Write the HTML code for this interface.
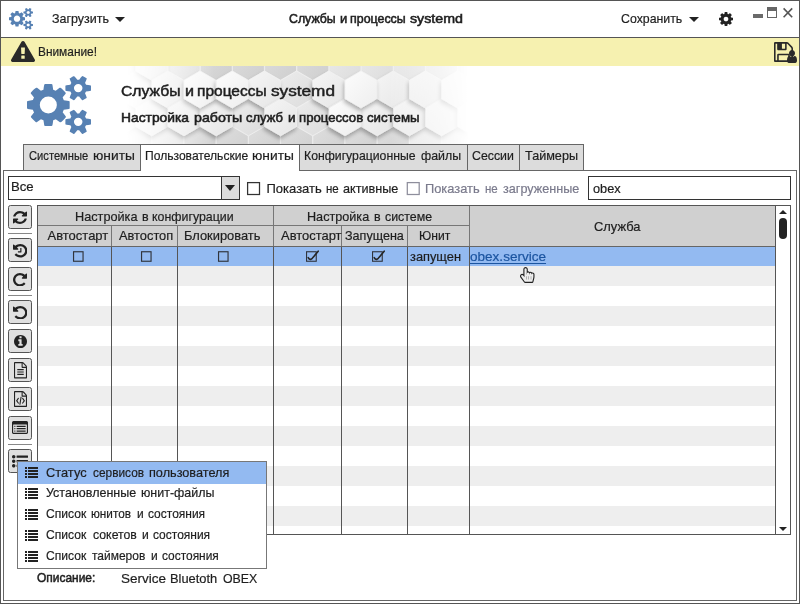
<!DOCTYPE html>
<html lang="ru"><head><meta charset="utf-8"><title>Службы и процессы systemd</title>
<style>
html,body{margin:0;padding:0;}
body{width:800px;height:604px;position:relative;overflow:hidden;background:#fff;font-family:"Liberation Sans", sans-serif;}
.p{position:absolute;left:0;top:0;white-space:pre;}
.t{position:absolute;white-space:pre;z-index:6;transform-origin:0 0;}
#txt{position:absolute;left:0;top:0;width:800px;height:604px;z-index:6;will-change:transform;}
#win{position:absolute;left:0;top:0;width:800px;height:604px;box-sizing:border-box;border:1px solid #555;z-index:9;pointer-events:none;}
</style></head><body>
<div style="position:absolute;left:0px;top:0px;width:800px;height:604px;background:#fff;"></div>
<div style="position:absolute;left:0px;top:37px;width:800px;height:1px;background:#555;"></div>
<div style="position:absolute;left:1px;top:38px;width:798px;height:28px;background:#f6f1b0;"></div>
<svg style="position:absolute;left:9px;top:8px;" width="24" height="21.5" viewBox="0 -1520 1920 1761" preserveAspectRatio="none"><path transform="scale(1,-1)" fill="#5781b3" d="M896 640q0 106 -75 181t-181 75t-181 -75t-75 -181t75 -181t181 -75t181 75t75 181zM1664 128q0 52 -38 90t-90 38t-90 -38t-38 -90q0 -53 37.5 -90.5t90.5 -37.5t90.5 37.5t37.5 90.5zM1664 1152q0 52 -38 90t-90 38t-90 -38t-38 -90q0 -53 37.5 -90.5t90.5 -37.5 t90.5 37.5t37.5 90.5zM1280 731v-185q0 -10 -7 -19.5t-16 -10.5l-155 -24q-11 -35 -32 -76q34 -48 90 -115q7 -11 7 -20q0 -12 -7 -19q-23 -30 -82.5 -89.5t-78.5 -59.5q-11 0 -21 7l-115 90q-37 -19 -77 -31q-11 -108 -23 -155q-7 -24 -30 -24h-186q-11 0 -20 7.5t-10 17.5 l-23 153q-34 10 -75 31l-118 -89q-7 -7 -20 -7q-11 0 -21 8q-144 133 -144 160q0 9 7 19q10 14 41 53t47 61q-23 44 -35 82l-152 24q-10 1 -17 9.5t-7 19.5v185q0 10 7 19.5t16 10.5l155 24q11 35 32 76q-34 48 -90 115q-7 11 -7 20q0 12 7 20q22 30 82 89t79 59q11 0 21 -7 l115 -90q34 18 77 32q11 108 23 154q7 24 30 24h186q11 0 20 -7.5t10 -17.5l23 -153q34 -10 75 -31l118 89q8 7 20 7q11 0 21 -8q144 -133 144 -160q0 -8 -7 -19q-12 -16 -42 -54t-45 -60q23 -48 34 -82l152 -23q10 -2 17 -10.5t7 -19.5zM1920 198v-140q0 -16 -149 -31 q-12 -27 -30 -52q51 -113 51 -138q0 -4 -4 -7q-122 -71 -124 -71q-8 0 -46 47t-52 68q-20 -2 -30 -2t-30 2q-14 -21 -52 -68t-46 -47q-2 0 -124 71q-4 3 -4 7q0 25 51 138q-18 25 -30 52q-149 15 -149 31v140q0 16 149 31q13 29 30 52q-51 113 -51 138q0 4 4 7q4 2 35 20 t59 34t30 16q8 0 46 -46.5t52 -67.5q20 2 30 2t30 -2q51 71 92 112l6 2q4 0 124 -70q4 -3 4 -7q0 -25 -51 -138q17 -23 30 -52q149 -15 149 -31zM1920 1222v-140q0 -16 -149 -31q-12 -27 -30 -52q51 -113 51 -138q0 -4 -4 -7q-122 -71 -124 -71q-8 0 -46 47t-52 68 q-20 -2 -30 -2t-30 2q-14 -21 -52 -68t-46 -47q-2 0 -124 71q-4 3 -4 7q0 25 51 138q-18 25 -30 52q-149 15 -149 31v140q0 16 149 31q13 29 30 52q-51 113 -51 138q0 4 4 7q4 2 35 20t59 34t30 16q8 0 46 -46.5t52 -67.5q20 2 30 2t30 -2q51 71 92 112l6 2q4 0 124 -70 q4 -3 4 -7q0 -25 -51 -138q17 -23 30 -52q149 -15 149 -31z"/></svg>
<svg style="position:absolute;left:115px;top:17px" width="10" height="5" viewBox="0 0 10 5"><path d="M0 0H10L5 5Z" fill="#222"/></svg>
<svg style="position:absolute;left:689px;top:17px" width="10" height="5" viewBox="0 0 10 5"><path d="M0 0H10L5 5Z" fill="#222"/></svg>
<svg style="position:absolute;left:719px;top:12px;" width="14" height="14" viewBox="0 -1408 1536 1536" preserveAspectRatio="none"><path transform="scale(1,-1)" fill="#222" d="M1024 640q0 106 -75 181t-181 75t-181 -75t-75 -181t75 -181t181 -75t181 75t75 181zM1536 749v-222q0 -12 -8 -23t-20 -13l-185 -28q-19 -54 -39 -91q35 -50 107 -138q10 -12 10 -25t-9 -23q-27 -37 -99 -108t-94 -71q-12 0 -26 9l-138 108q-44 -23 -91 -38 q-16 -136 -29 -186q-7 -28 -36 -28h-222q-14 0 -24.5 8.5t-11.5 21.5l-28 184q-49 16 -90 37l-141 -107q-10 -9 -25 -9q-14 0 -25 11q-126 114 -165 168q-7 10 -7 23q0 12 8 23q15 21 51 66.5t54 70.5q-27 50 -41 99l-183 27q-13 2 -21 12.5t-8 23.5v222q0 12 8 23t19 13 l186 28q14 46 39 92q-40 57 -107 138q-10 12 -10 24q0 10 9 23q26 36 98.5 107.5t94.5 71.5q13 0 26 -10l138 -107q44 23 91 38q16 136 29 186q7 28 36 28h222q14 0 24.5 -8.5t11.5 -21.5l28 -184q49 -16 90 -37l142 107q9 9 24 9q13 0 25 -10q129 -119 165 -170q7 -8 7 -22 q0 -12 -8 -23q-15 -21 -51 -66.5t-54 -70.5q26 -50 41 -98l183 -28q13 -2 21 -12.5t8 -23.5z"/></svg>
<div style="position:absolute;left:753px;top:14px;width:10px;height:4px;background:#6a6a6a;"></div>
<div style="position:absolute;left:767px;top:7px;width:10px;height:11px;box-sizing:border-box;border:1px solid #666;border-top:4px solid #666;background:#fff;"></div>
<svg style="position:absolute;left:782px;top:7px" width="12" height="12" viewBox="0 0 12 12"><path d="M1.6 1.4L10.2 10.2M10.2 1.4L1.6 10.2" stroke="#555" stroke-width="1.6" fill="none"/></svg>
<svg style="position:absolute;left:11px;top:41px;" width="24" height="21" viewBox="-1.0138893127441406 -1536 1794.02783203125 1664" preserveAspectRatio="none"><path transform="scale(1,-1)" fill="#2a2a2a" d="M1024 161v190q0 14 -9.5 23.5t-22.5 9.5h-192q-13 0 -22.5 -9.5t-9.5 -23.5v-190q0 -14 9.5 -23.5t22.5 -9.5h192q13 0 22.5 9.5t9.5 23.5zM1022 535l18 459q0 12 -10 19q-13 11 -24 11h-220q-11 0 -24 -11q-10 -7 -10 -21l17 -457q0 -10 10 -16.5t24 -6.5h185 q14 0 23.5 6.5t10.5 16.5zM1008 1469l768 -1408q35 -63 -2 -126q-17 -29 -46.5 -46t-63.5 -17h-1536q-34 0 -63.5 17t-46.5 46q-37 63 -2 126l768 1408q17 31 47 49t65 18t65 -18t47 -49z"/></svg>
<svg style="position:absolute;left:774px;top:42px;" width="19" height="20" viewBox="0 -1408 1536 1536" preserveAspectRatio="none"><path transform="scale(1,-1)" fill="#2a2a2a" d="M384 0h768v384h-768v-384zM1280 0h128v896q0 14 -10 38.5t-20 34.5l-281 281q-10 10 -34 20t-39 10v-416q0 -40 -28 -68t-68 -28h-576q-40 0 -68 28t-28 68v416h-128v-1280h128v416q0 40 28 68t68 28h832q40 0 68 -28t28 -68v-416zM896 928v320q0 13 -9.5 22.5t-22.5 9.5 h-192q-13 0 -22.5 -9.5t-9.5 -22.5v-320q0 -13 9.5 -22.5t22.5 -9.5h192q13 0 22.5 9.5t9.5 22.5zM1536 896v-928q0 -40 -28 -68t-68 -28h-1344q-40 0 -68 28t-28 68v1344q0 40 28 68t68 28h928q40 0 88 -20t76 -48l280 -280q28 -28 48 -76t20 -88z"/></svg>
<svg style="position:absolute;left:787px;top:50px;" width="10" height="13" viewBox="0 -1408 1280 1536" preserveAspectRatio="none"><path transform="scale(1,-1)" fill="#2a2a2a" d="M1280 137q0 -109 -62.5 -187t-150.5 -78h-854q-88 0 -150.5 78t-62.5 187q0 85 8.5 160.5t31.5 152t58.5 131t94 89t134.5 34.5q131 -128 313 -128t313 128q76 0 134.5 -34.5t94 -89t58.5 -131t31.5 -152t8.5 -160.5zM1024 1024q0 -159 -112.5 -271.5t-271.5 -112.5 t-271.5 112.5t-112.5 271.5t112.5 271.5t271.5 112.5t271.5 -112.5t112.5 -271.5z"/></svg>
<svg style="position:absolute;left:100px;top:66px" width="380" height="78" viewBox="100 66 380 78"><defs><linearGradient id="hm" x1="0" x2="1" y1="0" y2="0"><stop offset="0" stop-color="#000"/><stop offset="0.07" stop-color="#000"/><stop offset="0.30" stop-color="#fff"/><stop offset="0.76" stop-color="#fff"/><stop offset="0.97" stop-color="#000"/><stop offset="1" stop-color="#000"/></linearGradient><mask id="hmask" maskUnits="userSpaceOnUse" x="100" y="66" width="380" height="78"><rect x="100" y="66" width="380" height="78" fill="url(#hm)"/></mask><linearGradient id="hf" x1="0" y1="0" x2="1" y2="1"><stop offset="0" stop-color="#fcfcfc"/><stop offset="1" stop-color="#eeeeee"/></linearGradient><linearGradient id="hg" x1="0" y1="0" x2="1" y2="1"><stop offset="0" stop-color="#f5f5f5"/><stop offset="1" stop-color="#e6e6e6"/></linearGradient><linearGradient id="hd" x1="0" y1="0" x2="1" y2="1"><stop offset="0" stop-color="#ececec"/><stop offset="1" stop-color="#dcdcdc"/></linearGradient><linearGradient id="hdd" x1="0" y1="0" x2="1" y2="1"><stop offset="0" stop-color="#dedede"/><stop offset="1" stop-color="#cecece"/></linearGradient><filter id="hs" x="-30%" y="-30%" width="160%" height="160%"><feGaussianBlur in="SourceAlpha" stdDeviation="2.2"/><feOffset dx="-1.5" dy="2.5"/><feComponentTransfer><feFuncA type="linear" slope="0.3"/></feComponentTransfer><feMerge><feMergeNode/><feMergeNode in="SourceGraphic"/></feMerge></filter></defs><g mask="url(#hmask)"><rect x="100" y="66" width="380" height="78" fill="#e2e2e2"/><polygon points="200.0,126.6 215.9,135.8 215.9,154.2 200.0,163.4 184.1,154.2 184.1,135.8" fill="url(#hdd)" stroke="#f4f4f4" stroke-width="0.5"/><polygon points="216.2,43.3 232.1,52.5 232.1,71.0 216.2,80.2 200.3,71.0 200.3,52.5" fill="url(#hdd)" stroke="#f4f4f4" stroke-width="0.5"/><polygon points="232.2,126.6 248.1,135.8 248.1,154.2 232.2,163.4 216.3,154.2 216.3,135.8" fill="url(#hdd)" stroke="#f4f4f4" stroke-width="0.5"/><polygon points="248.4,43.3 264.3,52.5 264.3,71.0 248.4,80.2 232.5,71.0 232.5,52.5" fill="url(#hdd)" stroke="#f4f4f4" stroke-width="0.5"/><polygon points="264.4,126.6 280.3,135.8 280.3,154.2 264.4,163.4 248.5,154.2 248.5,135.8" fill="url(#hdd)" stroke="#f4f4f4" stroke-width="0.5"/><polygon points="280.6,43.3 296.5,52.5 296.5,71.0 280.6,80.2 264.7,71.0 264.7,52.5" fill="url(#hdd)" stroke="#f4f4f4" stroke-width="0.5"/><polygon points="296.6,126.6 312.5,135.8 312.5,154.2 296.6,163.4 280.7,154.2 280.7,135.8" fill="url(#hdd)" stroke="#f4f4f4" stroke-width="0.5"/><polygon points="312.8,43.3 328.7,52.5 328.7,71.0 312.8,80.2 296.9,71.0 296.9,52.5" fill="url(#hdd)" stroke="#f4f4f4" stroke-width="0.5"/><polygon points="328.8,126.6 344.7,135.8 344.7,154.2 328.8,163.4 312.9,154.2 312.9,135.8" fill="url(#hdd)" stroke="#f4f4f4" stroke-width="0.5"/><polygon points="361.0,126.6 376.9,135.8 376.9,154.2 361.0,163.4 345.1,154.2 345.1,135.8" fill="url(#hdd)" stroke="#f4f4f4" stroke-width="0.5"/><polygon points="393.2,126.6 409.1,135.8 409.1,154.2 393.2,163.4 377.3,154.2 377.3,135.8" fill="url(#hdd)" stroke="#f4f4f4" stroke-width="0.5"/><polygon points="87.4,43.3 103.3,52.5 103.3,71.0 87.4,80.2 71.5,71.0 71.5,52.5" fill="url(#hd)" stroke="#f4f4f4" stroke-width="0.5"/><polygon points="103.4,126.6 119.3,135.8 119.3,154.2 103.4,163.4 87.5,154.2 87.5,135.8" fill="url(#hd)" stroke="#f4f4f4" stroke-width="0.5"/><polygon points="119.6,43.3 135.5,52.5 135.5,71.0 119.6,80.2 103.7,71.0 103.7,52.5" fill="url(#hd)" stroke="#f4f4f4" stroke-width="0.5"/><polygon points="135.6,126.6 151.5,135.8 151.5,154.2 135.6,163.4 119.7,154.2 119.7,135.8" fill="url(#hd)" stroke="#f4f4f4" stroke-width="0.5"/><polygon points="167.8,126.6 183.7,135.8 183.7,154.2 167.8,163.4 151.9,154.2 151.9,135.8" fill="url(#hd)" stroke="#f4f4f4" stroke-width="0.5"/><polygon points="184.0,43.3 199.9,52.5 199.9,71.0 184.0,80.2 168.1,71.0 168.1,52.5" fill="url(#hd)" stroke="#f4f4f4" stroke-width="0.5"/><polygon points="248.4,98.8 264.3,108.0 264.3,126.5 248.4,135.7 232.5,126.5 232.5,108.0" fill="url(#hd)" stroke="#f4f4f4" stroke-width="0.5"/><polygon points="296.6,71.1 312.5,80.3 312.5,98.7 296.6,107.9 280.7,98.7 280.7,80.3" fill="url(#hd)" stroke="#f4f4f4" stroke-width="0.5"/><polygon points="312.8,98.8 328.7,108.0 328.7,126.5 312.8,135.7 296.9,126.5 296.9,108.0" fill="url(#hd)" stroke="#f4f4f4" stroke-width="0.5"/><polygon points="345.0,43.3 360.9,52.5 360.9,71.0 345.0,80.2 329.1,71.0 329.1,52.5" fill="url(#hd)" stroke="#f4f4f4" stroke-width="0.5"/><polygon points="377.2,43.3 393.1,52.5 393.1,71.0 377.2,80.2 361.3,71.0 361.3,52.5" fill="url(#hd)" stroke="#f4f4f4" stroke-width="0.5"/><polygon points="409.4,43.3 425.3,52.5 425.3,71.0 409.4,80.2 393.5,71.0 393.5,52.5" fill="url(#hd)" stroke="#f4f4f4" stroke-width="0.5"/><polygon points="425.4,126.6 441.3,135.8 441.3,154.2 425.4,163.4 409.5,154.2 409.5,135.8" fill="url(#hd)" stroke="#f4f4f4" stroke-width="0.5"/><polygon points="441.6,43.3 457.5,52.5 457.5,71.0 441.6,80.2 425.7,71.0 425.7,52.5" fill="url(#hd)" stroke="#f4f4f4" stroke-width="0.5"/><polygon points="457.6,126.6 473.5,135.8 473.5,154.2 457.6,163.4 441.7,154.2 441.7,135.8" fill="url(#hd)" stroke="#f4f4f4" stroke-width="0.5"/><polygon points="473.8,43.3 489.7,52.5 489.7,71.0 473.8,80.2 457.9,71.0 457.9,52.5" fill="url(#hd)" stroke="#f4f4f4" stroke-width="0.5"/><polygon points="489.8,126.6 505.7,135.8 505.7,154.2 489.8,163.4 473.9,154.2 473.9,135.8" fill="url(#hd)" stroke="#f4f4f4" stroke-width="0.5"/><polygon points="87.4,98.8 103.3,108.0 103.3,126.5 87.4,135.7 71.5,126.5 71.5,108.0" fill="url(#hg)" stroke="#f4f4f4" stroke-width="0.5" filter="url(#hs)"/><polygon points="103.4,71.1 119.3,80.3 119.3,98.7 103.4,107.9 87.5,98.7 87.5,80.3" fill="url(#hg)" stroke="#f4f4f4" stroke-width="0.5" filter="url(#hs)"/><polygon points="119.6,98.8 135.5,108.0 135.5,126.5 119.6,135.7 103.7,126.5 103.7,108.0" fill="url(#hg)" stroke="#f4f4f4" stroke-width="0.5" filter="url(#hs)"/><polygon points="135.6,71.1 151.5,80.3 151.5,98.7 135.6,107.9 119.7,98.7 119.7,80.3" fill="url(#hg)" stroke="#f4f4f4" stroke-width="0.5" filter="url(#hs)"/><polygon points="151.8,43.3 167.7,52.5 167.7,71.0 151.8,80.2 135.9,71.0 135.9,52.5" fill="url(#hg)" stroke="#f4f4f4" stroke-width="0.5" filter="url(#hs)"/><polygon points="151.8,98.8 167.7,108.0 167.7,126.5 151.8,135.7 135.9,126.5 135.9,108.0" fill="url(#hg)" stroke="#f4f4f4" stroke-width="0.5" filter="url(#hs)"/><polygon points="167.8,71.1 183.7,80.3 183.7,98.7 167.8,107.9 151.9,98.7 151.9,80.3" fill="url(#hg)" stroke="#f4f4f4" stroke-width="0.5" filter="url(#hs)"/><polygon points="184.0,98.8 199.9,108.0 199.9,126.5 184.0,135.7 168.1,126.5 168.1,108.0" fill="url(#hg)" stroke="#f4f4f4" stroke-width="0.5" filter="url(#hs)"/><polygon points="216.2,98.8 232.1,108.0 232.1,126.5 216.2,135.7 200.3,126.5 200.3,108.0" fill="url(#hg)" stroke="#f4f4f4" stroke-width="0.5" filter="url(#hs)"/><polygon points="264.4,71.1 280.3,80.3 280.3,98.7 264.4,107.9 248.5,98.7 248.5,80.3" fill="url(#hg)" stroke="#f4f4f4" stroke-width="0.5" filter="url(#hs)"/><polygon points="280.6,98.8 296.5,108.0 296.5,126.5 280.6,135.7 264.7,126.5 264.7,108.0" fill="url(#hg)" stroke="#f4f4f4" stroke-width="0.5" filter="url(#hs)"/><polygon points="328.8,71.1 344.7,80.3 344.7,98.7 328.8,107.9 312.9,98.7 312.9,80.3" fill="url(#hg)" stroke="#f4f4f4" stroke-width="0.5" filter="url(#hs)"/><polygon points="377.2,98.8 393.1,108.0 393.1,126.5 377.2,135.7 361.3,126.5 361.3,108.0" fill="url(#hg)" stroke="#f4f4f4" stroke-width="0.5" filter="url(#hs)"/><polygon points="393.2,71.1 409.1,80.3 409.1,98.7 393.2,107.9 377.3,98.7 377.3,80.3" fill="url(#hg)" stroke="#f4f4f4" stroke-width="0.5" filter="url(#hs)"/><polygon points="409.4,98.8 425.3,108.0 425.3,126.5 409.4,135.7 393.5,126.5 393.5,108.0" fill="url(#hg)" stroke="#f4f4f4" stroke-width="0.5" filter="url(#hs)"/><polygon points="425.4,71.1 441.3,80.3 441.3,98.7 425.4,107.9 409.5,98.7 409.5,80.3" fill="url(#hg)" stroke="#f4f4f4" stroke-width="0.5" filter="url(#hs)"/><polygon points="441.6,98.8 457.5,108.0 457.5,126.5 441.6,135.7 425.7,126.5 425.7,108.0" fill="url(#hg)" stroke="#f4f4f4" stroke-width="0.5" filter="url(#hs)"/><polygon points="457.6,71.1 473.5,80.3 473.5,98.7 457.6,107.9 441.7,98.7 441.7,80.3" fill="url(#hg)" stroke="#f4f4f4" stroke-width="0.5" filter="url(#hs)"/><polygon points="473.8,98.8 489.7,108.0 489.7,126.5 473.8,135.7 457.9,126.5 457.9,108.0" fill="url(#hg)" stroke="#f4f4f4" stroke-width="0.5" filter="url(#hs)"/><polygon points="489.8,71.1 505.7,80.3 505.7,98.7 489.8,107.9 473.9,98.7 473.9,80.3" fill="url(#hg)" stroke="#f4f4f4" stroke-width="0.5" filter="url(#hs)"/><polygon points="200.0,71.1 215.9,80.3 215.9,98.7 200.0,107.9 184.1,98.7 184.1,80.3" fill="url(#hf)" stroke="#f4f4f4" stroke-width="0.5" filter="url(#hs)"/><polygon points="232.2,71.1 248.1,80.3 248.1,98.7 232.2,107.9 216.3,98.7 216.3,80.3" fill="url(#hf)" stroke="#f4f4f4" stroke-width="0.5" filter="url(#hs)"/><polygon points="345.0,98.8 360.9,108.0 360.9,126.5 345.0,135.7 329.1,126.5 329.1,108.0" fill="url(#hf)" stroke="#f4f4f4" stroke-width="0.5" filter="url(#hs)"/><polygon points="361.0,71.1 376.9,80.3 376.9,98.7 361.0,107.9 345.1,98.7 345.1,80.3" fill="url(#hf)" stroke="#f4f4f4" stroke-width="0.5" filter="url(#hs)"/></g></svg>
<svg style="position:absolute;left:27px;top:75.5px;" width="64" height="58" viewBox="0 -1520 1920 1761" preserveAspectRatio="none"><path transform="scale(1,-1)" fill="#5781b3" d="M896 640q0 106 -75 181t-181 75t-181 -75t-75 -181t75 -181t181 -75t181 75t75 181zM1664 128q0 52 -38 90t-90 38t-90 -38t-38 -90q0 -53 37.5 -90.5t90.5 -37.5t90.5 37.5t37.5 90.5zM1664 1152q0 52 -38 90t-90 38t-90 -38t-38 -90q0 -53 37.5 -90.5t90.5 -37.5 t90.5 37.5t37.5 90.5zM1280 731v-185q0 -10 -7 -19.5t-16 -10.5l-155 -24q-11 -35 -32 -76q34 -48 90 -115q7 -11 7 -20q0 -12 -7 -19q-23 -30 -82.5 -89.5t-78.5 -59.5q-11 0 -21 7l-115 90q-37 -19 -77 -31q-11 -108 -23 -155q-7 -24 -30 -24h-186q-11 0 -20 7.5t-10 17.5 l-23 153q-34 10 -75 31l-118 -89q-7 -7 -20 -7q-11 0 -21 8q-144 133 -144 160q0 9 7 19q10 14 41 53t47 61q-23 44 -35 82l-152 24q-10 1 -17 9.5t-7 19.5v185q0 10 7 19.5t16 10.5l155 24q11 35 32 76q-34 48 -90 115q-7 11 -7 20q0 12 7 20q22 30 82 89t79 59q11 0 21 -7 l115 -90q34 18 77 32q11 108 23 154q7 24 30 24h186q11 0 20 -7.5t10 -17.5l23 -153q34 -10 75 -31l118 89q8 7 20 7q11 0 21 -8q144 -133 144 -160q0 -8 -7 -19q-12 -16 -42 -54t-45 -60q23 -48 34 -82l152 -23q10 -2 17 -10.5t7 -19.5zM1920 198v-140q0 -16 -149 -31 q-12 -27 -30 -52q51 -113 51 -138q0 -4 -4 -7q-122 -71 -124 -71q-8 0 -46 47t-52 68q-20 -2 -30 -2t-30 2q-14 -21 -52 -68t-46 -47q-2 0 -124 71q-4 3 -4 7q0 25 51 138q-18 25 -30 52q-149 15 -149 31v140q0 16 149 31q13 29 30 52q-51 113 -51 138q0 4 4 7q4 2 35 20 t59 34t30 16q8 0 46 -46.5t52 -67.5q20 2 30 2t30 -2q51 71 92 112l6 2q4 0 124 -70q4 -3 4 -7q0 -25 -51 -138q17 -23 30 -52q149 -15 149 -31zM1920 1222v-140q0 -16 -149 -31q-12 -27 -30 -52q51 -113 51 -138q0 -4 -4 -7q-122 -71 -124 -71q-8 0 -46 47t-52 68 q-20 -2 -30 -2t-30 2q-14 -21 -52 -68t-46 -47q-2 0 -124 71q-4 3 -4 7q0 25 51 138q-18 25 -30 52q-149 15 -149 31v140q0 16 149 31q13 29 30 52q-51 113 -51 138q0 4 4 7q4 2 35 20t59 34t30 16q8 0 46 -46.5t52 -67.5q20 2 30 2t30 -2q51 71 92 112l6 2q4 0 124 -70 q4 -3 4 -7q0 -25 -51 -138q17 -23 30 -52q149 -15 149 -31z"/></svg>
<div style="position:absolute;left:23px;top:144px;width:118px;height:27px;box-sizing:border-box;border:1px solid #666;border-bottom:none;background:#dcdcdc;"></div>
<div style="position:absolute;left:140px;top:144px;width:160px;height:27px;box-sizing:border-box;border:1px solid #666;border-bottom:none;background:#fff;"></div>
<div style="position:absolute;left:299px;top:144px;width:169px;height:27px;box-sizing:border-box;border:1px solid #666;border-bottom:none;background:#dcdcdc;"></div>
<div style="position:absolute;left:467px;top:144px;width:53px;height:27px;box-sizing:border-box;border:1px solid #666;border-bottom:none;background:#dcdcdc;"></div>
<div style="position:absolute;left:519px;top:144px;width:65px;height:27px;box-sizing:border-box;border:1px solid #666;border-bottom:none;background:#dcdcdc;"></div>
<div style="position:absolute;left:3px;top:170px;width:794px;height:431px;box-sizing:border-box;border:1px solid #666;background:#fff;"></div>
<div style="position:absolute;left:141px;top:170px;width:158px;height:1px;background:#fff;z-index:3;"></div>
<div style="position:absolute;left:8px;top:176px;width:232px;height:24px;box-sizing:border-box;border:1px solid #333;background:#fff;"></div>
<div style="position:absolute;left:221px;top:177px;width:18px;height:22px;box-sizing:border-box;border-left:1px solid #333;background:#dcdcdc;"></div>
<svg style="position:absolute;left:225px;top:185px" width="10" height="6" viewBox="0 0 10 6"><path d="M0 0H10L5 6Z" fill="#222"/></svg>
<svg style="position:absolute;left:246px;top:181px" width="15" height="15" viewBox="0 0 15 15"><rect x="1.6" y="1.6" width="11.9" height="11.9" fill="#fff" stroke="#333" stroke-width="1.25"/></svg>
<svg style="position:absolute;left:406px;top:181px" width="15" height="15" viewBox="0 0 15 15"><rect x="1.3" y="1.6" width="11.9" height="11.9" fill="#fff" stroke="#8e8e9c" stroke-width="1.25"/></svg>
<div style="position:absolute;left:588px;top:176px;width:203px;height:24px;box-sizing:border-box;border:1px solid #333;background:#fff;"></div>
<div style="position:absolute;left:8px;top:205px;width:24px;height:24px;box-sizing:border-box;border:1px solid #555;border-radius:2.5px;background:#e0e0e0;"></div>
<div style="position:absolute;left:8px;top:238px;width:24px;height:24px;box-sizing:border-box;border:1px solid #555;border-radius:2.5px;background:#e0e0e0;"></div>
<div style="position:absolute;left:8px;top:267px;width:24px;height:24px;box-sizing:border-box;border:1px solid #555;border-radius:2.5px;background:#e0e0e0;"></div>
<div style="position:absolute;left:8px;top:300px;width:24px;height:24px;box-sizing:border-box;border:1px solid #555;border-radius:2.5px;background:#e0e0e0;"></div>
<div style="position:absolute;left:8px;top:329px;width:24px;height:24px;box-sizing:border-box;border:1px solid #555;border-radius:2.5px;background:#e0e0e0;"></div>
<div style="position:absolute;left:8px;top:358px;width:24px;height:24px;box-sizing:border-box;border:1px solid #555;border-radius:2.5px;background:#e0e0e0;"></div>
<div style="position:absolute;left:8px;top:387px;width:24px;height:24px;box-sizing:border-box;border:1px solid #555;border-radius:2.5px;background:#e0e0e0;"></div>
<div style="position:absolute;left:8px;top:416px;width:24px;height:24px;box-sizing:border-box;border:1px solid #555;border-radius:2.5px;background:#e0e0e0;"></div>
<div style="position:absolute;left:8px;top:449px;width:24px;height:24px;box-sizing:border-box;border:1px solid #555;border-radius:2.5px;background:#e0e0e0;"></div>
<div style="position:absolute;left:8px;top:233px;width:24px;height:1px;background:#888;"></div>
<div style="position:absolute;left:8px;top:295px;width:24px;height:1px;background:#888;"></div>
<div style="position:absolute;left:8px;top:444px;width:24px;height:1px;background:#888;"></div>
<svg style="position:absolute;left:13px;top:211px;" width="14" height="13" viewBox="0 -1408 1536 1536" preserveAspectRatio="none"><path transform="scale(1,-1)" fill="#222" d="M1511 480q0 -5 -1 -7q-64 -268 -268 -434.5t-478 -166.5q-146 0 -282.5 55t-243.5 157l-129 -129q-19 -19 -45 -19t-45 19t-19 45v448q0 26 19 45t45 19h448q26 0 45 -19t19 -45t-19 -45l-137 -137q71 -66 161 -102t187 -36q134 0 250 65t186 179q11 17 53 117 q8 23 30 23h192q13 0 22.5 -9.5t9.5 -22.5zM1536 1280v-448q0 -26 -19 -45t-45 -19h-448q-26 0 -45 19t-19 45t19 45l138 138q-148 137 -349 137q-134 0 -250 -65t-186 -179q-11 -17 -53 -117q-8 -23 -30 -23h-199q-13 0 -22.5 9.5t-9.5 22.5v7q65 268 270 434.5t480 166.5 q146 0 284 -55.5t245 -156.5l130 129q19 19 45 19t45 -19t19 -45z"/></svg>
<svg style="position:absolute;left:12.5px;top:244px;" width="14.5" height="13.5" viewBox="0 -1408 1536 1536" preserveAspectRatio="none"><path transform="scale(1,-1)" fill="#222" d="M1536 640q0 -156 -61 -298t-164 -245t-245 -164t-298 -61q-172 0 -327 72.5t-264 204.5q-7 10 -6.5 22.5t8.5 20.5l137 138q10 9 25 9q16 -2 23 -12q73 -95 179 -147t225 -52q104 0 198.5 40.5t163.5 109.5t109.5 163.5t40.5 198.5t-40.5 198.5t-109.5 163.5 t-163.5 109.5t-198.5 40.5q-98 0 -188 -35.5t-160 -101.5l137 -138q31 -30 14 -69q-17 -40 -59 -40h-448q-26 0 -45 19t-19 45v448q0 42 40 59q39 17 69 -14l130 -129q107 101 244.5 156.5t284.5 55.5q156 0 298 -61t245 -164t164 -245t61 -298zM896 928v-448q0 -14 -9 -23 t-23 -9h-320q-14 0 -23 9t-9 23v64q0 14 9 23t23 9h224v352q0 14 9 23t23 9h64q14 0 23 -9t9 -23z"/></svg>
<svg style="position:absolute;left:13px;top:272.5px;" width="14" height="13.5" viewBox="0 -1408 1536 1536" preserveAspectRatio="none"><path transform="scale(1,-1)" fill="#222" d="M1536 1280v-448q0 -26 -19 -45t-45 -19h-448q-42 0 -59 40q-17 39 14 69l138 138q-148 137 -349 137q-104 0 -198.5 -40.5t-163.5 -109.5t-109.5 -163.5t-40.5 -198.5t40.5 -198.5t109.5 -163.5t163.5 -109.5t198.5 -40.5q119 0 225 52t179 147q7 10 23 12q15 0 25 -9 l137 -138q9 -8 9.5 -20.5t-7.5 -22.5q-109 -132 -264 -204.5t-327 -72.5q-156 0 -298 61t-245 164t-164 245t-61 298t61 298t164 245t245 164t298 61q147 0 284.5 -55.5t244.5 -156.5l130 129q29 31 70 14q39 -17 39 -59z"/></svg>
<svg style="position:absolute;left:12.5px;top:305.5px;" width="14.5" height="13.5" viewBox="0 -1408 1536 1536" preserveAspectRatio="none"><path transform="scale(1,-1)" fill="#222" d="M1536 640q0 -156 -61 -298t-164 -245t-245 -164t-298 -61q-172 0 -327 72.5t-264 204.5q-7 10 -6.5 22.5t8.5 20.5l137 138q10 9 25 9q16 -2 23 -12q73 -95 179 -147t225 -52q104 0 198.5 40.5t163.5 109.5t109.5 163.5t40.5 198.5t-40.5 198.5t-109.5 163.5 t-163.5 109.5t-198.5 40.5q-98 0 -188 -35.5t-160 -101.5l137 -138q31 -30 14 -69q-17 -40 -59 -40h-448q-26 0 -45 19t-19 45v448q0 42 40 59q39 17 69 -14l130 -129q107 101 244.5 156.5t284.5 55.5q156 0 298 -61t245 -164t164 -245t61 -298z"/></svg>
<svg style="position:absolute;left:13.5px;top:334.5px;" width="13" height="13" viewBox="0 -1408 1536 1536" preserveAspectRatio="none"><path transform="scale(1,-1)" fill="#222" d="M1024 160v160q0 14 -9 23t-23 9h-96v512q0 14 -9 23t-23 9h-320q-14 0 -23 -9t-9 -23v-160q0 -14 9 -23t23 -9h96v-320h-96q-14 0 -23 -9t-9 -23v-160q0 -14 9 -23t23 -9h448q14 0 23 9t9 23zM896 1056v160q0 14 -9 23t-23 9h-192q-14 0 -23 -9t-9 -23v-160q0 -14 9 -23 t23 -9h192q14 0 23 9t9 23zM1536 640q0 -209 -103 -385.5t-279.5 -279.5t-385.5 -103t-385.5 103t-279.5 279.5t-103 385.5t103 385.5t279.5 279.5t385.5 103t385.5 -103t279.5 -279.5t103 -385.5z"/></svg>
<svg style="position:absolute;left:13.5px;top:362px;" width="13" height="16.5" viewBox="0 -1536 1536 1792" preserveAspectRatio="none"><path transform="scale(1,-1)" fill="#222" d="M1468 1156q28 -28 48 -76t20 -88v-1152q0 -40 -28 -68t-68 -28h-1344q-40 0 -68 28t-28 68v1600q0 40 28 68t68 28h896q40 0 88 -20t76 -48zM1024 1400v-376h376q-10 29 -22 41l-313 313q-12 12 -41 22zM1408 -128v1024h-416q-40 0 -68 28t-28 68v416h-768v-1536h1280z M384 736q0 14 9 23t23 9h704q14 0 23 -9t9 -23v-64q0 -14 -9 -23t-23 -9h-704q-14 0 -23 9t-9 23v64zM1120 512q14 0 23 -9t9 -23v-64q0 -14 -9 -23t-23 -9h-704q-14 0 -23 9t-9 23v64q0 14 9 23t23 9h704zM1120 256q14 0 23 -9t9 -23v-64q0 -14 -9 -23t-23 -9h-704 q-14 0 -23 9t-9 23v64q0 14 9 23t23 9h704z"/></svg>
<svg style="position:absolute;left:13.5px;top:391px;" width="13" height="16" viewBox="0 -1536 1536 1792" preserveAspectRatio="none"><path transform="scale(1,-1)" fill="#222" d="M1468 1156q28 -28 48 -76t20 -88v-1152q0 -40 -28 -68t-68 -28h-1344q-40 0 -68 28t-28 68v1600q0 40 28 68t68 28h896q40 0 88 -20t76 -48zM1024 1400v-376h376q-10 29 -22 41l-313 313q-12 12 -41 22zM1408 -128v1024h-416q-40 0 -68 28t-28 68v416h-768v-1536h1280z M480 768q8 11 21 12.5t24 -6.5l51 -38q11 -8 12.5 -21t-6.5 -24l-182 -243l182 -243q8 -11 6.5 -24t-12.5 -21l-51 -38q-11 -8 -24 -6.5t-21 12.5l-226 301q-14 19 0 38zM1282 467q14 -19 0 -38l-226 -301q-8 -11 -21 -12.5t-24 6.5l-51 38q-11 8 -12.5 21t6.5 24l182 243 l-182 243q-8 11 -6.5 24t12.5 21l51 38q11 8 24 6.5t21 -12.5zM662 6q-13 2 -20.5 13t-5.5 24l138 831q2 13 13 20.5t24 5.5l63 -10q13 -2 20.5 -13t5.5 -24l-138 -831q-2 -13 -13 -20.5t-24 -5.5z"/></svg>
<svg style="position:absolute;left:12px;top:421px;" width="16" height="13" viewBox="0 -1408 1792 1408" preserveAspectRatio="none"><path transform="scale(1,-1)" fill="#222" d="M384 352v-64q0 -13 -9.5 -22.5t-22.5 -9.5h-64q-13 0 -22.5 9.5t-9.5 22.5v64q0 13 9.5 22.5t22.5 9.5h64q13 0 22.5 -9.5t9.5 -22.5zM384 608v-64q0 -13 -9.5 -22.5t-22.5 -9.5h-64q-13 0 -22.5 9.5t-9.5 22.5v64q0 13 9.5 22.5t22.5 9.5h64q13 0 22.5 -9.5t9.5 -22.5z M384 864v-64q0 -13 -9.5 -22.5t-22.5 -9.5h-64q-13 0 -22.5 9.5t-9.5 22.5v64q0 13 9.5 22.5t22.5 9.5h64q13 0 22.5 -9.5t9.5 -22.5zM1536 352v-64q0 -13 -9.5 -22.5t-22.5 -9.5h-960q-13 0 -22.5 9.5t-9.5 22.5v64q0 13 9.5 22.5t22.5 9.5h960q13 0 22.5 -9.5t9.5 -22.5z M1536 608v-64q0 -13 -9.5 -22.5t-22.5 -9.5h-960q-13 0 -22.5 9.5t-9.5 22.5v64q0 13 9.5 22.5t22.5 9.5h960q13 0 22.5 -9.5t9.5 -22.5zM1536 864v-64q0 -13 -9.5 -22.5t-22.5 -9.5h-960q-13 0 -22.5 9.5t-9.5 22.5v64q0 13 9.5 22.5t22.5 9.5h960q13 0 22.5 -9.5 t9.5 -22.5zM1664 160v832q0 13 -9.5 22.5t-22.5 9.5h-1472q-13 0 -22.5 -9.5t-9.5 -22.5v-832q0 -13 9.5 -22.5t22.5 -9.5h1472q13 0 22.5 9.5t9.5 22.5zM1792 1248v-1088q0 -66 -47 -113t-113 -47h-1472q-66 0 -113 47t-47 113v1088q0 66 47 113t113 47h1472q66 0 113 -47 t47 -113z"/></svg>
<svg style="position:absolute;left:12px;top:455px;" width="16" height="12.5" viewBox="0 -1344 1792 1408" preserveAspectRatio="none"><path transform="scale(1,-1)" fill="#222" d="M384 128q0 -80 -56 -136t-136 -56t-136 56t-56 136t56 136t136 56t136 -56t56 -136zM384 640q0 -80 -56 -136t-136 -56t-136 56t-56 136t56 136t136 56t136 -56t56 -136zM1792 224v-192q0 -13 -9.5 -22.5t-22.5 -9.5h-1216q-13 0 -22.5 9.5t-9.5 22.5v192q0 13 9.5 22.5 t22.5 9.5h1216q13 0 22.5 -9.5t9.5 -22.5zM384 1152q0 -80 -56 -136t-136 -56t-136 56t-56 136t56 136t136 56t136 -56t56 -136zM1792 736v-192q0 -13 -9.5 -22.5t-22.5 -9.5h-1216q-13 0 -22.5 9.5t-9.5 22.5v192q0 13 9.5 22.5t22.5 9.5h1216q13 0 22.5 -9.5t9.5 -22.5z M1792 1248v-192q0 -13 -9.5 -22.5t-22.5 -9.5h-1216q-13 0 -22.5 9.5t-9.5 22.5v192q0 13 9.5 22.5t22.5 9.5h1216q13 0 22.5 -9.5t9.5 -22.5z"/></svg>
<div style="position:absolute;left:37px;top:205px;width:754px;height:330px;box-sizing:border-box;border:1px solid #555;background:#fff;"></div>
<div style="position:absolute;left:38px;top:266px;width:737px;height:20px;background:#eeeeee;"></div>
<div style="position:absolute;left:38px;top:306px;width:737px;height:20px;background:#eeeeee;"></div>
<div style="position:absolute;left:38px;top:346px;width:737px;height:20px;background:#eeeeee;"></div>
<div style="position:absolute;left:38px;top:386px;width:737px;height:20px;background:#eeeeee;"></div>
<div style="position:absolute;left:38px;top:426px;width:737px;height:20px;background:#eeeeee;"></div>
<div style="position:absolute;left:38px;top:466px;width:737px;height:20px;background:#eeeeee;"></div>
<div style="position:absolute;left:38px;top:506px;width:737px;height:20px;background:#eeeeee;"></div>
<div style="position:absolute;left:38px;top:247px;width:737px;height:19px;background:#93baf1;"></div>
<div style="position:absolute;left:38px;top:206px;width:737px;height:40px;background:#d0d0d0;"></div>
<div style="position:absolute;left:38px;top:225px;width:432px;height:1px;background:#777;"></div>
<div style="position:absolute;left:38px;top:246px;width:737px;height:1px;background:#666;"></div>
<div style="position:absolute;left:111px;top:226px;width:1px;height:20px;background:#777;"></div>
<div style="position:absolute;left:111px;top:247px;width:1px;height:287px;background:#555;"></div>
<div style="position:absolute;left:177px;top:226px;width:1px;height:20px;background:#777;"></div>
<div style="position:absolute;left:177px;top:247px;width:1px;height:287px;background:#555;"></div>
<div style="position:absolute;left:273px;top:206px;width:1px;height:40px;background:#777;"></div>
<div style="position:absolute;left:273px;top:247px;width:1px;height:287px;background:#555;"></div>
<div style="position:absolute;left:341px;top:226px;width:1px;height:20px;background:#777;"></div>
<div style="position:absolute;left:341px;top:247px;width:1px;height:287px;background:#555;"></div>
<div style="position:absolute;left:407px;top:226px;width:1px;height:20px;background:#777;"></div>
<div style="position:absolute;left:407px;top:247px;width:1px;height:287px;background:#555;"></div>
<div style="position:absolute;left:469px;top:206px;width:1px;height:40px;background:#777;"></div>
<div style="position:absolute;left:469px;top:247px;width:1px;height:287px;background:#555;"></div>
<div style="position:absolute;left:775px;top:206px;width:1px;height:328px;background:#555;"></div>
<svg style="position:absolute;left:779px;top:209.5px" width="8" height="4" viewBox="0 0 8 4"><path d="M0 4H8L4 0Z" fill="#222"/></svg>
<svg style="position:absolute;left:779px;top:527px" width="8" height="4" viewBox="0 0 8 4"><path d="M0 0H8L4 4Z" fill="#222"/></svg>
<div style="position:absolute;left:779px;top:218px;width:8px;height:21px;background:#222;border-radius:4px;"></div>
<svg style="position:absolute;left:72.2px;top:250px" width="14" height="14" viewBox="0 0 14 14"><rect x="1.55" y="1.75" width="9.5" height="9.5" fill="none" stroke="#30343c" stroke-width="1.15"/></svg>
<svg style="position:absolute;left:140px;top:250px" width="14" height="14" viewBox="0 0 14 14"><rect x="1.55" y="1.75" width="9.5" height="9.5" fill="none" stroke="#30343c" stroke-width="1.15"/></svg>
<svg style="position:absolute;left:216.6px;top:250px" width="14" height="14" viewBox="0 0 14 14"><rect x="1.55" y="1.75" width="9.5" height="9.5" fill="none" stroke="#30343c" stroke-width="1.15"/></svg>
<svg style="position:absolute;left:305.2px;top:249px" width="16" height="15" viewBox="0 0 16 15"><rect x="1.55" y="2.75" width="9.7" height="9.5" fill="none" stroke="#30343c" stroke-width="1.1"/><path d="M3.2 8.6Q4.2 10.6 5.8 10.4Q7 10.2 8.2 8.2L13.2 2.2" fill="none" stroke="#262626" stroke-width="1.6" stroke-linecap="round" stroke-linejoin="round"/></svg>
<svg style="position:absolute;left:370.6px;top:249px" width="16" height="15" viewBox="0 0 16 15"><rect x="1.55" y="2.75" width="9.7" height="9.5" fill="none" stroke="#30343c" stroke-width="1.1"/><path d="M3.2 8.6Q4.2 10.6 5.8 10.4Q7 10.2 8.2 8.2L13.2 2.2" fill="none" stroke="#262626" stroke-width="1.6" stroke-linecap="round" stroke-linejoin="round"/></svg>
<svg style="position:absolute;left:520px;top:267px;z-index:5;" width="14.5" height="16" viewBox="0 -1536 1664 1792" preserveAspectRatio="none"><path transform="scale(1,-1)" fill="#222" d="M640 1408q-53 0 -90.5 -37.5t-37.5 -90.5v-512v-384l-151 202q-41 54 -107 54q-52 0 -89 -38t-37 -90q0 -43 26 -77l384 -512q38 -51 102 -51h718q22 0 39.5 13.5t22.5 34.5l92 368q24 96 24 194v217q0 41 -28 71t-68 30t-68 -28t-28 -68h-32v61q0 48 -32 81.5t-80 33.5 q-46 0 -79 -33t-33 -79v-64h-32v90q0 55 -37 94.5t-91 39.5q-53 0 -90.5 -37.5t-37.5 -90.5v-96h-32v570q0 55 -37 94.5t-91 39.5zM640 1536q107 0 181.5 -77.5t74.5 -184.5v-220q22 2 32 2q99 0 173 -69q47 21 99 21q113 0 184 -87q27 7 56 7q94 0 159 -67.5t65 -161.5 v-217q0 -116 -28 -225l-92 -368q-16 -64 -68 -104.5t-118 -40.5h-718q-60 0 -114.5 27.5t-90.5 74.5l-384 512q-51 68 -51 154q0 105 74.5 180.5t179.5 75.5q71 0 130 -35v547q0 106 75 181t181 75zM768 128v384h-32v-384h32zM1024 128v384h-32v-384h32zM1280 128v384h-32 v-384h32z"/></svg>
<div style="position:absolute;left:17px;top:461px;width:250px;height:108px;box-sizing:border-box;border:1px solid #777;background:#fff;z-index:4;"></div>
<div style="position:absolute;left:18px;top:462px;width:248px;height:22px;background:#93baf1;z-index:4;"></div>
<svg style="position:absolute;left:25px;top:467px;z-index:5" width="13" height="11" viewBox="0 0 13 11" fill="#222" shape-rendering="crispEdges"><rect x="0" y="0" width="2" height="2"/><rect x="3" y="0" width="10" height="2"/><rect x="0" y="3" width="2" height="2"/><rect x="3" y="3" width="10" height="2"/><rect x="0" y="6" width="2" height="2"/><rect x="3" y="6" width="10" height="2"/><rect x="0" y="9" width="2" height="2"/><rect x="3" y="9" width="10" height="2"/></svg>
<svg style="position:absolute;left:25px;top:488px;z-index:5" width="13" height="11" viewBox="0 0 13 11" fill="#222" shape-rendering="crispEdges"><rect x="0" y="0" width="2" height="2"/><rect x="3" y="0" width="10" height="2"/><rect x="0" y="3" width="2" height="2"/><rect x="3" y="3" width="10" height="2"/><rect x="0" y="6" width="2" height="2"/><rect x="3" y="6" width="10" height="2"/><rect x="0" y="9" width="2" height="2"/><rect x="3" y="9" width="10" height="2"/></svg>
<svg style="position:absolute;left:25px;top:509px;z-index:5" width="13" height="11" viewBox="0 0 13 11" fill="#222" shape-rendering="crispEdges"><rect x="0" y="0" width="2" height="2"/><rect x="3" y="0" width="10" height="2"/><rect x="0" y="3" width="2" height="2"/><rect x="3" y="3" width="10" height="2"/><rect x="0" y="6" width="2" height="2"/><rect x="3" y="6" width="10" height="2"/><rect x="0" y="9" width="2" height="2"/><rect x="3" y="9" width="10" height="2"/></svg>
<svg style="position:absolute;left:25px;top:530px;z-index:5" width="13" height="11" viewBox="0 0 13 11" fill="#222" shape-rendering="crispEdges"><rect x="0" y="0" width="2" height="2"/><rect x="3" y="0" width="10" height="2"/><rect x="0" y="3" width="2" height="2"/><rect x="3" y="3" width="10" height="2"/><rect x="0" y="6" width="2" height="2"/><rect x="3" y="6" width="10" height="2"/><rect x="0" y="9" width="2" height="2"/><rect x="3" y="9" width="10" height="2"/></svg>
<svg style="position:absolute;left:25px;top:551px;z-index:5" width="13" height="11" viewBox="0 0 13 11" fill="#222" shape-rendering="crispEdges"><rect x="0" y="0" width="2" height="2"/><rect x="3" y="0" width="10" height="2"/><rect x="0" y="3" width="2" height="2"/><rect x="3" y="3" width="10" height="2"/><rect x="0" y="6" width="2" height="2"/><rect x="3" y="6" width="10" height="2"/><rect x="0" y="9" width="2" height="2"/><rect x="3" y="9" width="10" height="2"/></svg>
<div id="txt">
<span class="t" style="left:51.52px;top:10.00px;font-size:13px;line-height:17px;transform:scaleX(0.9614);color:#1e1e1e;font-weight:normal;-webkit-text-stroke:0.2px #1e1e1e;">Загрузить</span>
<span class="p"><span class="t" style="left:288.59px;top:9.50px;font-size:13px;line-height:17px;transform:scaleX(0.9487);color:#1e1e1e;font-weight:normal;-webkit-text-stroke:0.55px #1e1e1e;">Службы</span> <span class="t" style="left:339.88px;top:9.50px;font-size:13px;line-height:17px;transform:scaleX(0.9991);color:#1e1e1e;font-weight:normal;-webkit-text-stroke:0.55px #1e1e1e;">и</span> <span class="t" style="left:349.88px;top:9.50px;font-size:13px;line-height:17px;transform:scaleX(0.9551);color:#1e1e1e;font-weight:normal;-webkit-text-stroke:0.55px #1e1e1e;">процессы</span> <span class="t" style="left:409.75px;top:9.50px;font-size:13px;line-height:17px;transform:scaleX(1.0936);color:#1e1e1e;font-weight:normal;-webkit-text-stroke:0.55px #1e1e1e;">systemd</span></span>
<span class="t" style="left:621.29px;top:10.00px;font-size:13px;line-height:17px;transform:scaleX(0.9486);color:#1e1e1e;font-weight:normal;-webkit-text-stroke:0.2px #1e1e1e;">Сохранить</span>
<span class="t" style="left:38.49px;top:42.60px;font-size:13px;line-height:17px;transform:scaleX(0.9136);color:#1e1e1e;font-weight:normal;-webkit-text-stroke:0.2px #1e1e1e;">Внимание!</span>
<span class="p"><span class="t" style="left:121.36px;top:81.75px;font-size:14px;line-height:18px;transform:scaleX(1.1220);color:#1e1e1e;font-weight:normal;-webkit-text-stroke:0.45px #1e1e1e;">Службы</span> <span class="t" style="left:185.09px;top:81.75px;font-size:14px;line-height:18px;transform:scaleX(1.1526);color:#1e1e1e;font-weight:normal;-webkit-text-stroke:0.45px #1e1e1e;">и</span> <span class="t" style="left:197.29px;top:81.75px;font-size:14px;line-height:18px;transform:scaleX(1.1082);color:#1e1e1e;font-weight:normal;-webkit-text-stroke:0.45px #1e1e1e;">процессы</span> <span class="t" style="left:271.09px;top:81.75px;font-size:14px;line-height:18px;transform:scaleX(1.2276);color:#1e1e1e;font-weight:normal;-webkit-text-stroke:0.45px #1e1e1e;">systemd</span></span>
<span class="p"><span class="t" style="left:121.14px;top:109.00px;font-size:13px;line-height:17px;transform:scaleX(1.0635);color:#1e1e1e;font-weight:normal;-webkit-text-stroke:0.55px #1e1e1e;">Настройка</span> <span class="t" style="left:194.18px;top:109.00px;font-size:13px;line-height:17px;transform:scaleX(1.0941);color:#1e1e1e;font-weight:normal;-webkit-text-stroke:0.55px #1e1e1e;">работы</span> <span class="t" style="left:246.20px;top:109.00px;font-size:13px;line-height:17px;transform:scaleX(0.9972);color:#1e1e1e;font-weight:normal;-webkit-text-stroke:0.55px #1e1e1e;">служб</span> <span class="t" style="left:288.44px;top:109.00px;font-size:13px;line-height:17px;transform:scaleX(1.0373);color:#1e1e1e;font-weight:normal;-webkit-text-stroke:0.55px #1e1e1e;">и</span> <span class="t" style="left:298.94px;top:109.00px;font-size:13px;line-height:17px;transform:scaleX(1.0129);color:#1e1e1e;font-weight:normal;-webkit-text-stroke:0.55px #1e1e1e;">процессов</span> <span class="t" style="left:366.69px;top:109.00px;font-size:13px;line-height:17px;transform:scaleX(1.0189);color:#1e1e1e;font-weight:normal;-webkit-text-stroke:0.55px #1e1e1e;">системы</span></span>
<span class="p"><span class="t" style="left:28.86px;top:146.50px;font-size:13px;line-height:17px;transform:scaleX(0.8593);color:#1e1e1e;font-weight:normal;-webkit-text-stroke:0.2px #1e1e1e;">Системные</span> <span class="t" style="left:92.96px;top:146.50px;font-size:13px;line-height:17px;transform:scaleX(1.0596);color:#1e1e1e;font-weight:normal;-webkit-text-stroke:0.2px #1e1e1e;">юниты</span></span>
<span class="p"><span class="t" style="left:145.32px;top:146.50px;font-size:13px;line-height:17px;transform:scaleX(0.9292);color:#1e1e1e;font-weight:normal;-webkit-text-stroke:0.2px #1e1e1e;">Пользовательские</span> <span class="t" style="left:252.46px;top:146.50px;font-size:13px;line-height:17px;transform:scaleX(1.0596);color:#1e1e1e;font-weight:normal;-webkit-text-stroke:0.2px #1e1e1e;">юниты</span></span>
<span class="p"><span class="t" style="left:304.06px;top:146.50px;font-size:13px;line-height:17px;transform:scaleX(0.9422);color:#1e1e1e;font-weight:normal;-webkit-text-stroke:0.2px #1e1e1e;">Конфигурационные</span> <span class="t" style="left:420.77px;top:146.50px;font-size:13px;line-height:17px;transform:scaleX(0.9509);color:#1e1e1e;font-weight:normal;-webkit-text-stroke:0.2px #1e1e1e;">файлы</span></span>
<span class="t" style="left:471.79px;top:146.50px;font-size:13px;line-height:17px;transform:scaleX(0.9482);color:#1e1e1e;font-weight:normal;-webkit-text-stroke:0.2px #1e1e1e;">Сессии</span>
<span class="t" style="left:525.36px;top:146.50px;font-size:13px;line-height:17px;transform:scaleX(0.9701);color:#1e1e1e;font-weight:normal;-webkit-text-stroke:0.2px #1e1e1e;">Таймеры</span>
<span class="t" style="left:10.99px;top:178.30px;font-size:13px;line-height:17px;transform:scaleX(1.0120);color:#1e1e1e;font-weight:normal;-webkit-text-stroke:0.2px #1e1e1e;">Все</span>
<span class="p"><span class="t" style="left:266.50px;top:179.80px;font-size:13px;line-height:17px;transform:scaleX(1.0000);color:#1e1e1e;font-weight:normal;-webkit-text-stroke:0.2px #1e1e1e;">Показать</span> <span class="t" style="left:326.09px;top:179.80px;font-size:13px;line-height:17px;transform:scaleX(0.8846);color:#1e1e1e;font-weight:normal;-webkit-text-stroke:0.2px #1e1e1e;">не</span> <span class="t" style="left:343.26px;top:179.80px;font-size:13px;line-height:17px;transform:scaleX(0.9731);color:#1e1e1e;font-weight:normal;-webkit-text-stroke:0.2px #1e1e1e;">активные</span></span>
<span class="p"><span class="t" style="left:425.41px;top:179.80px;font-size:13px;line-height:17px;transform:scaleX(0.9879);color:#7a7a8c;font-weight:normal;-webkit-text-stroke:0.2px #7a7a8c;">Показать</span> <span class="t" style="left:484.84px;top:179.80px;font-size:13px;line-height:17px;transform:scaleX(0.8846);color:#7a7a8c;font-weight:normal;-webkit-text-stroke:0.2px #7a7a8c;">не</span> <span class="t" style="left:502.76px;top:179.80px;font-size:13px;line-height:17px;transform:scaleX(0.9711);color:#7a7a8c;font-weight:normal;-webkit-text-stroke:0.2px #7a7a8c;">загруженные</span></span>
<span class="t" style="left:593.01px;top:179.50px;font-size:13px;line-height:17px;transform:scaleX(0.9818);color:#1e1e1e;font-weight:normal;-webkit-text-stroke:0.2px #1e1e1e;">obex</span>
<span class="p"><span class="t" style="left:74.52px;top:207.50px;font-size:13px;line-height:17px;transform:scaleX(0.9762);color:#1e1e1e;font-weight:normal;-webkit-text-stroke:0.2px #1e1e1e;">Настройка</span> <span class="t" style="left:141.88px;top:207.50px;font-size:13px;line-height:17px;transform:scaleX(0.9643);color:#1e1e1e;font-weight:normal;-webkit-text-stroke:0.2px #1e1e1e;">в</span> <span class="t" style="left:152.29px;top:207.50px;font-size:13px;line-height:17px;transform:scaleX(0.9524);color:#1e1e1e;font-weight:normal;-webkit-text-stroke:0.2px #1e1e1e;">конфигурации</span></span>
<span class="p"><span class="t" style="left:307.43px;top:207.50px;font-size:13px;line-height:17px;transform:scaleX(0.9714);color:#1e1e1e;font-weight:normal;-webkit-text-stroke:0.2px #1e1e1e;">Настройка</span> <span class="t" style="left:374.33px;top:207.50px;font-size:13px;line-height:17px;transform:scaleX(0.9620);color:#1e1e1e;font-weight:normal;-webkit-text-stroke:0.2px #1e1e1e;">в</span> <span class="t" style="left:384.92px;top:207.50px;font-size:13px;line-height:17px;transform:scaleX(0.9526);color:#1e1e1e;font-weight:normal;-webkit-text-stroke:0.2px #1e1e1e;">системе</span></span>
<span class="t" style="left:47.50px;top:227.00px;font-size:13px;line-height:17px;transform:scaleX(1.0000);color:#1e1e1e;font-weight:normal;-webkit-text-stroke:0.2px #1e1e1e;">Автостарт</span>
<span class="t" style="left:118.70px;top:227.00px;font-size:13px;line-height:17px;transform:scaleX(0.9870);color:#1e1e1e;font-weight:normal;-webkit-text-stroke:0.2px #1e1e1e;">Автостоп</span>
<span class="t" style="left:184.01px;top:227.00px;font-size:13px;line-height:17px;transform:scaleX(0.9901);color:#1e1e1e;font-weight:normal;-webkit-text-stroke:0.2px #1e1e1e;">Блокировать</span>
<span class="t" style="left:280.50px;top:227.00px;font-size:13px;line-height:17px;transform:scaleX(0.9950);color:#1e1e1e;font-weight:normal;-webkit-text-stroke:0.2px #1e1e1e;">Автостарт</span>
<span class="t" style="left:345.22px;top:227.00px;font-size:13px;line-height:17px;transform:scaleX(0.9676);color:#1e1e1e;font-weight:normal;-webkit-text-stroke:0.2px #1e1e1e;">Запущена</span>
<span class="t" style="left:419.07px;top:227.00px;font-size:13px;line-height:17px;transform:scaleX(0.9302);color:#1e1e1e;font-weight:normal;-webkit-text-stroke:0.2px #1e1e1e;">Юнит</span>
<span class="t" style="left:593.76px;top:218.00px;font-size:13px;line-height:17px;transform:scaleX(0.9924);color:#1e1e1e;font-weight:normal;-webkit-text-stroke:0.2px #1e1e1e;">Служба</span>
<span class="t" style="left:410.45px;top:248.00px;font-size:13px;line-height:17px;transform:scaleX(0.9861);color:#1e1e1e;font-weight:normal;-webkit-text-stroke:0.2px #1e1e1e;">запущен</span>
<span class="t" style="left:470.48px;top:248.00px;font-size:13px;line-height:17px;transform:scaleX(1.0417);color:#1c55a0;font-weight:normal;-webkit-text-stroke:0.2px #1c55a0;text-decoration:underline;text-underline-offset:2px;">obex.service</span>
<span class="p"><span class="t" style="left:46.01px;top:463.60px;font-size:13px;line-height:17px;transform:scaleX(0.9875);color:#1e1e1e;font-weight:normal;-webkit-text-stroke:0.2px #1e1e1e;">Статус</span> <span class="t" style="left:93.29px;top:463.60px;font-size:13px;line-height:17px;transform:scaleX(0.9132);color:#1e1e1e;font-weight:normal;-webkit-text-stroke:0.2px #1e1e1e;">сервисов</span> <span class="t" style="left:149.27px;top:463.60px;font-size:13px;line-height:17px;transform:scaleX(0.9752);color:#1e1e1e;font-weight:normal;-webkit-text-stroke:0.2px #1e1e1e;">пользователя</span></span>
<span class="p"><span class="t" style="left:46.27px;top:484.40px;font-size:13px;line-height:17px;transform:scaleX(0.9622);color:#1e1e1e;font-weight:normal;-webkit-text-stroke:0.2px #1e1e1e;">Установленные</span> <span class="t" style="left:140.53px;top:484.40px;font-size:13px;line-height:17px;transform:scaleX(0.9600);color:#1e1e1e;font-weight:normal;-webkit-text-stroke:0.2px #1e1e1e;">юнит-файлы</span></span>
<span class="p"><span class="t" style="left:46.05px;top:505.20px;font-size:13px;line-height:17px;transform:scaleX(0.9294);color:#1e1e1e;font-weight:normal;-webkit-text-stroke:0.2px #1e1e1e;">Список</span> <span class="t" style="left:91.32px;top:505.20px;font-size:13px;line-height:17px;transform:scaleX(0.9064);color:#1e1e1e;font-weight:normal;-webkit-text-stroke:0.2px #1e1e1e;">юнитов</span> <span class="t" style="left:136.92px;top:505.20px;font-size:13px;line-height:17px;transform:scaleX(0.9191);color:#1e1e1e;font-weight:normal;-webkit-text-stroke:0.2px #1e1e1e;">и</span> <span class="t" style="left:147.54px;top:505.20px;font-size:13px;line-height:17px;transform:scaleX(0.9215);color:#1e1e1e;font-weight:normal;-webkit-text-stroke:0.2px #1e1e1e;">состояния</span></span>
<span class="p"><span class="t" style="left:46.05px;top:526.00px;font-size:13px;line-height:17px;transform:scaleX(0.9294);color:#1e1e1e;font-weight:normal;-webkit-text-stroke:0.2px #1e1e1e;">Список</span> <span class="t" style="left:92.78px;top:526.00px;font-size:13px;line-height:17px;transform:scaleX(0.9451);color:#1e1e1e;font-weight:normal;-webkit-text-stroke:0.2px #1e1e1e;">сокетов</span> <span class="t" style="left:141.87px;top:526.00px;font-size:13px;line-height:17px;transform:scaleX(0.9320);color:#1e1e1e;font-weight:normal;-webkit-text-stroke:0.2px #1e1e1e;">и</span> <span class="t" style="left:152.54px;top:526.00px;font-size:13px;line-height:17px;transform:scaleX(0.9215);color:#1e1e1e;font-weight:normal;-webkit-text-stroke:0.2px #1e1e1e;">состояния</span></span>
<span class="p"><span class="t" style="left:46.05px;top:546.80px;font-size:13px;line-height:17px;transform:scaleX(0.9294);color:#1e1e1e;font-weight:normal;-webkit-text-stroke:0.2px #1e1e1e;">Список</span> <span class="t" style="left:92.27px;top:546.80px;font-size:13px;line-height:17px;transform:scaleX(0.9211);color:#1e1e1e;font-weight:normal;-webkit-text-stroke:0.2px #1e1e1e;">таймеров</span> <span class="t" style="left:151.41px;top:546.80px;font-size:13px;line-height:17px;transform:scaleX(0.9226);color:#1e1e1e;font-weight:normal;-webkit-text-stroke:0.2px #1e1e1e;">и</span> <span class="t" style="left:162.04px;top:546.80px;font-size:13px;line-height:17px;transform:scaleX(0.9174);color:#1e1e1e;font-weight:normal;-webkit-text-stroke:0.2px #1e1e1e;">состояния</span></span>
<span class="t" style="left:37.40px;top:570.94px;font-size:12px;line-height:15px;transform:scaleX(0.9965);color:#1e1e1e;font-weight:normal;-webkit-text-stroke:0.5px #1e1e1e;">Описание:</span>
<span class="p"><span class="t" style="left:120.92px;top:569.60px;font-size:13px;line-height:17px;transform:scaleX(1.0381);color:#1e1e1e;font-weight:normal;-webkit-text-stroke:0.2px #1e1e1e;">Service</span> <span class="t" style="left:170.11px;top:569.60px;font-size:13px;line-height:17px;transform:scaleX(0.9891);color:#1e1e1e;font-weight:normal;-webkit-text-stroke:0.2px #1e1e1e;">Bluetoth</span> <span class="t" style="left:222.62px;top:569.60px;font-size:13px;line-height:17px;transform:scaleX(0.9504);color:#1e1e1e;font-weight:normal;-webkit-text-stroke:0.2px #1e1e1e;">OBEX</span></span>
</div>
<div id="win"></div>
</body></html>
